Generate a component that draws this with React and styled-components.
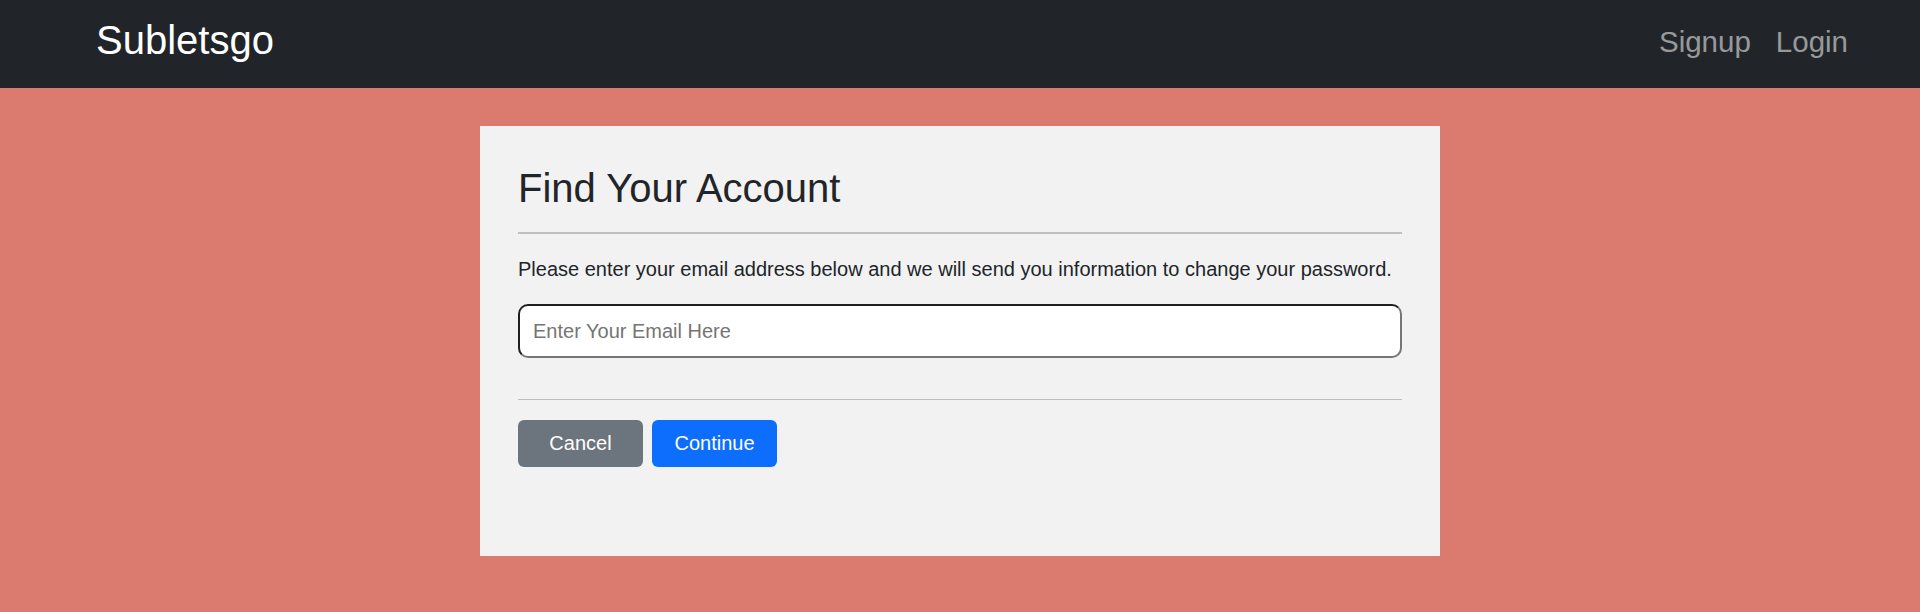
import React, { useState } from "react";
import styled, { createGlobalStyle } from "styled-components";

const GlobalStyle = createGlobalStyle`
  html, body {
    margin: 0;
    padding: 0;
    background: #db7b70;
    font-family: "Liberation Sans", Arial, sans-serif;
    color: #212529;
  }
  * {
    box-sizing: border-box;
  }
`;

const NavBar = styled.nav`
  height: 88px;
  background: #212529;
  display: flex;
  align-items: center;
  justify-content: space-between;
  padding: 0 72px 0 96px;
`;
const Brand = styled.a`
  font-size: 40px;
  line-height: 40px;
  color: #fff;
  text-decoration: none;
  margin-bottom: 9px;
`;
const NavLinks = styled.div`
  display: flex;
  align-items: center;
  gap: 25px;
  margin-bottom: 5px;
`;
const NavLink = styled.a`
  font-size: 29.5px;
  line-height: 29.5px;
  color: rgba(255, 255, 255, 0.55);
  text-decoration: none;
`;

const Card = styled.div`
  width: 960px;
  margin: 38px auto 0;
  background: #f2f2f2;
  padding: 38px 38px 89px;
`;
const Title = styled.h1`
  margin: 0;
  font-size: 40px;
  line-height: 48px;
  font-weight: 400;
  color: #212529;
`;
const Divider = styled.hr`
  border: 0;
  border-top: ${(p) => (p.thick ? 2 : 1)}px solid #bfbfbf;
  margin: ${(p) => p.space || "20px 0"};
`;
const Text = styled.p`
  margin: 0 0 20px;
  font-size: 20px;
  line-height: 30px;
  color: #212529;
`;
const EmailInput = styled.input`
  display: block;
  width: 100%;
  height: 54px;
  padding: 0 13px;
  font-family: inherit;
  font-size: 20px;
  color: #212529;
  background: #fff;
  border: 2px solid;
  border-color: #1f1f1f #767676 #767676 #1f1f1f;
  border-radius: 10px;
  outline: none;
  &::placeholder {
    color: #757575;
  }
`;
const ButtonRow = styled.div`
  display: flex;
  gap: 9px;
`;
const Button = styled.button`
  width: 125px;
  height: 47px;
  border: 0;
  border-radius: 6px;
  font-family: inherit;
  font-size: 20px;
  color: #fff;
  background: ${(p) => (p.primary ? "#0d6efd" : "#6c757d")};
  cursor: pointer;
`;

function App() {
  const [email, setEmail] = useState("");

  return (
    <div>
      <GlobalStyle />
      <NavBar>
        <Brand href="#">Subletsgo</Brand>
        <NavLinks>
          <NavLink href="#">Signup</NavLink>
          <NavLink href="#">Login</NavLink>
        </NavLinks>
      </NavBar>
      <Card>
        <Title>Find Your Account</Title>
        <Divider thick />
        <Text>
          Please enter your email address below and we will send you
          information to change your password.
        </Text>
        <EmailInput
          type="email"
          placeholder="Enter Your Email Here"
          value={email}
          onChange={(e) => setEmail(e.target.value)}
        />
        <Divider space="41px 0 20px" />
        <ButtonRow>
          <Button>Cancel</Button>
          <Button primary>Continue</Button>
        </ButtonRow>
      </Card>
    </div>
  );
}

export default App;
